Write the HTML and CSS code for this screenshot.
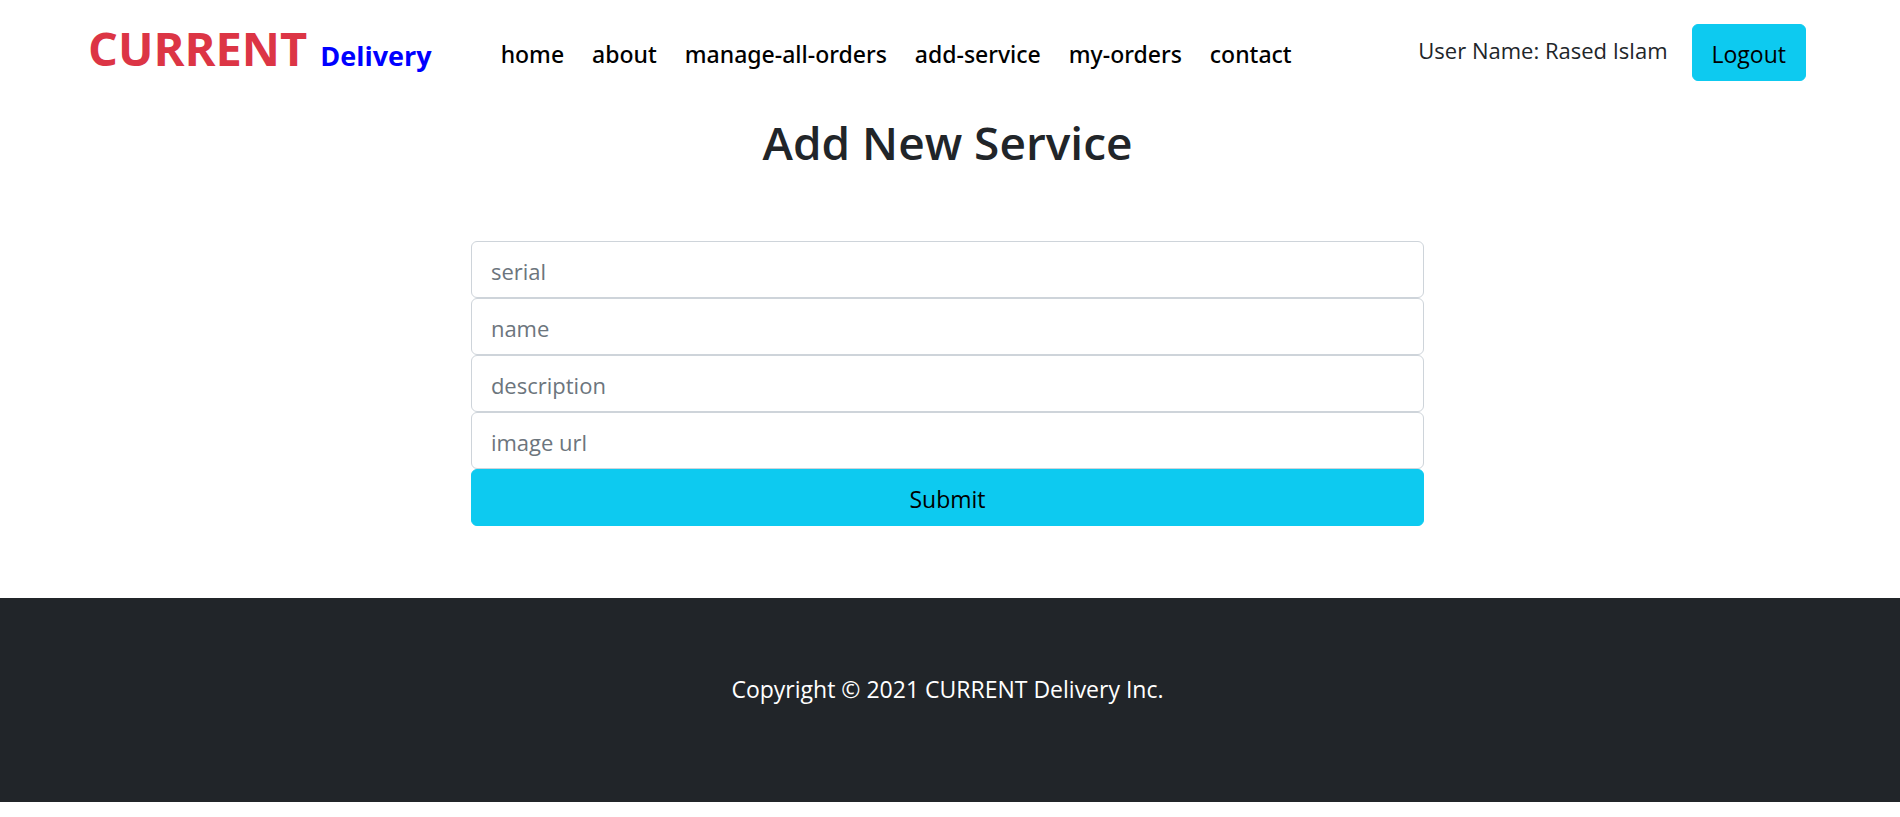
FILE: index.html
```html
<!DOCTYPE html>
<html lang="en">
<head>
<meta charset="utf-8">
<meta name="viewport" content="width=device-width, initial-scale=1">
<title>CURRENT Delivery</title>
<link rel="stylesheet" href="styles.css">
</head>
<body>
<header class="header">
  <a class="brand" href="#"><span class="brand-main">CURRENT</span><span class="brand-sub">Delivery</span></a>
  <nav class="nav">
    <a href="#">home</a>
    <a href="#">about</a>
    <a href="#">manage-all-orders</a>
    <a href="#">add-service</a>
    <a href="#">my-orders</a>
    <a href="#">contact</a>
  </nav>
  <div class="account">
    <span class="user">User Name: Rased Islam</span>
    <button class="btn" type="button">Logout</button>
  </div>
</header>
<main class="main">
  <h1 class="title">Add New Service</h1>
  <form class="form">
    <input class="field" type="text" placeholder="serial" aria-label="serial">
    <input class="field" type="text" placeholder="name" aria-label="name">
    <input class="field" type="text" placeholder="description" aria-label="description">
    <input class="field" type="text" placeholder="image url" aria-label="image url">
    <button class="btn" type="submit">Submit</button>
  </form>
</main>
<footer class="footer">
  <p class="copyright">Copyright © 2021 CURRENT Delivery Inc.</p>
</footer>
</body>
</html>
```
FILE: styles.css
```css
* {
  box-sizing: border-box;
}

body {
  margin: 0;
  background: #fff;
  color: #212529;
  font-family: "Open Sans", "Noto Sans", sans-serif;
  font-size: 23px;
  line-height: 36px;
}

a {
  color: inherit;
  text-decoration: none;
}

.header {
  display: flex;
  align-items: center;
  padding: 24px 94px 0 88px;
}

.brand {
  display: flex;
  align-items: baseline;
  gap: 13px;
  padding-bottom: 2px;
  font-weight: 700;
  line-height: 46px;
}

.brand-main {
  color: #dc3545;
  font-size: 47px;
}

.brand-sub {
  color: #00f;
  font-size: 27px;
}

.nav {
  display: flex;
  gap: 28px;
  margin-left: 69px;
  padding-top: 2px;
  color: #000;
  font-family: "Noto Sans", "Open Sans", sans-serif;
  font-weight: 500;
}

.account {
  display: flex;
  align-items: flex-start;
  gap: 24px;
  margin-left: auto;
}

.user {
  padding-top: 8px;
  font-size: 22px;
}

.btn {
  height: 57px;
  padding: 2px 19px 0;
  border: 1px solid #0dcaf0;
  border-radius: 6px;
  background: #0dcaf0;
  color: #000;
  font: inherit;
}

.main {
  padding: 32px 5px 72px 0;
}

.title {
  margin: 0 0 70px;
  font-size: 46px;
  font-weight: 600;
  line-height: 58px;
  text-align: center;
}

.form {
  display: flex;
  flex-direction: column;
  width: 50.3%;
  margin: 0 auto;
}

.field {
  height: 57px;
  padding: 2px 19px 0;
  border: 1px solid #ced4da;
  border-radius: 6px;
  background: #fff;
  color: #212529;
  font: inherit;
  font-size: 22px;
}

.field::placeholder {
  color: #6c757d;
  opacity: 1;
}

.footer {
  padding: 73px 5px 95px 0;
  background: #212529;
  color: #fff;
  text-align: center;
}

.copyright {
  margin: 0;
}
```
